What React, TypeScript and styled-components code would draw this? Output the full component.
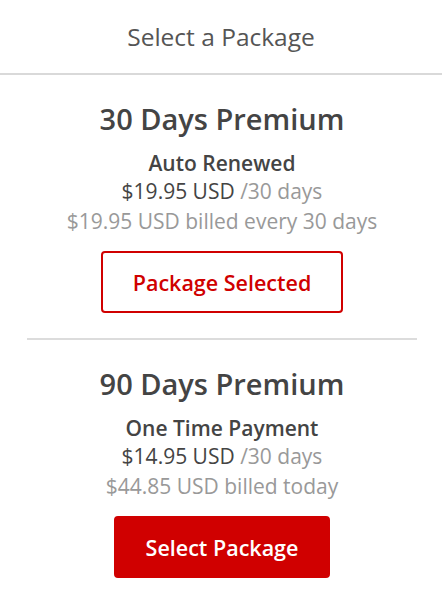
import styled, { createGlobalStyle } from "styled-components";

const GlobalStyle = createGlobalStyle`
  body {
    margin: 0;
    background: #fff;
    font-family: "Open Sans", Lato, sans-serif;
  }
`;

const Page = styled.div`
  width: 442px;
`;

const Header = styled.div`
  height: 73px;
  border-bottom: 2px solid #d9d9d9;
  display: flex;
  align-items: center;
  justify-content: center;
  font-size: 24.5px;
  color: #555;
`;

const List = styled.div`
  padding: 0 25px 0 27px;
`;

const Card = styled.div<{ last?: boolean }>`
  display: flex;
  flex-direction: column;
  align-items: center;
  padding: 26px 0 25px;
  border-bottom: ${(p) => (p.last ? "none" : "2px solid #dcdcdc")};
`;

const Title = styled.h2`
  margin: 0;
  font-size: 29px;
  font-weight: 600;
  color: #444;
  line-height: 36px;
`;

const Plan = styled.div`
  margin-top: 13px;
  font-size: 21px;
  font-weight: 600;
  color: #444;
  line-height: 26px;
`;

const Price = styled.div`
  font-size: 21px;
  color: #444;
  line-height: 30px;
`;

const Muted = styled.span`
  color: #999;
`;

const Billed = styled.div`
  font-size: 21px;
  color: #999;
  line-height: 30px;
`;

const Button = styled.button<{ selected?: boolean }>`
  margin-top: 15px;
  height: 62px;
  padding: 0 30px;
  border-radius: 4px;
  border: 2px solid #d00000;
  background: ${(p) => (p.selected ? "#fff" : "#d00000")};
  color: ${(p) => (p.selected ? "#d00000" : "#fff")};
  font-family: inherit;
  font-size: 21.5px;
  font-weight: 600;
  cursor: pointer;
`;

const packages = [
  {
    title: "30 Days Premium",
    plan: "Auto Renewed",
    price: "$19.95 USD",
    billed: "$19.95 USD billed every 30 days",
    selected: true,
  },
  {
    title: "90 Days Premium",
    plan: "One Time Payment",
    price: "$14.95 USD",
    billed: "$44.85 USD billed today",
    selected: false,
  },
];

export default function App() {
  return (
    <Page>
      <GlobalStyle />
      <Header>Select a Package</Header>
      <List>
        {packages.map((p, i) => (
          <Card key={p.title} last={i === packages.length - 1}>
            <Title>{p.title}</Title>
            <Plan>{p.plan}</Plan>
            <Price>
              {p.price} <Muted>/30 days</Muted>
            </Price>
            <Billed>{p.billed}</Billed>
            <Button selected={p.selected}>
              {p.selected ? "Package Selected" : "Select Package"}
            </Button>
          </Card>
        ))}
      </List>
    </Page>
  );
}
